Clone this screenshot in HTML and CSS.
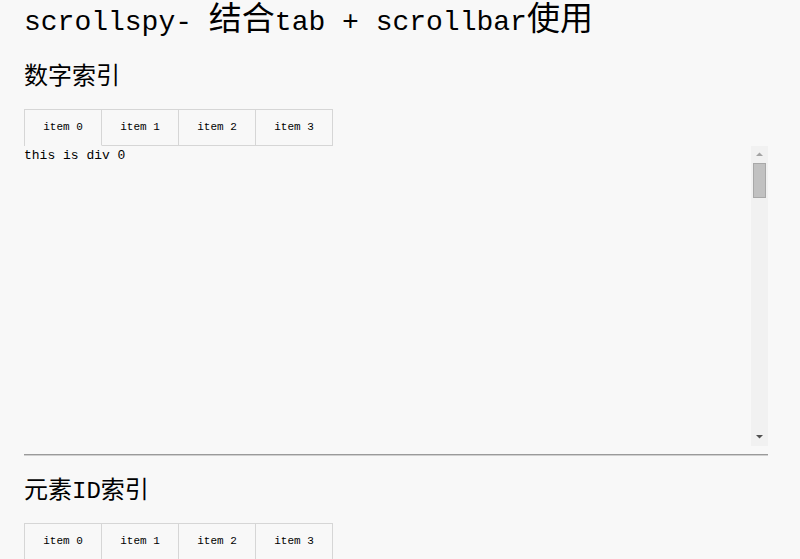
FILE: index.html
```html
<!DOCTYPE html>
<html lang="zh">
<head>
<meta charset="utf-8">
<title>scrollspy</title>
<link rel="stylesheet" href="styles.css">
</head>
<body>
<div class="page">
  <h1 class="title">scrollspy- <span class="cjk">结合</span>tab + scrollbar<span class="cjk">使用</span></h1>

  <section class="demo">
    <h2 class="subtitle">数字索引</h2>
    <ul class="tabs">
      <li class="tab active">item 0</li>
      <li class="tab">item 1</li>
      <li class="tab">item 2</li>
      <li class="tab">item 3</li>
    </ul>
    <div class="scroller">
      <div class="scroll-content">
        <div class="panel">this is div 0</div>
        <div class="panel">this is div 1</div>
        <div class="panel">this is div 2</div>
        <div class="panel">this is div 3</div>
      </div>
      <div class="scrollbar">
        <div class="sb-btn"><svg width="17" height="17" viewBox="0 0 17 17"><path d="M5 10h7L8.5 6.5z" fill="#a3a3a3"/></svg></div>
        <div class="sb-track"><div class="sb-thumb"></div></div>
        <div class="sb-btn"><svg width="17" height="17" viewBox="0 0 17 17"><path d="M5 6h7L8.5 9.5z" fill="#505050"/></svg></div>
      </div>
    </div>
  </section>

  <hr class="divider">

  <section class="demo">
    <h2 class="subtitle">元素ID索引</h2>
    <ul class="tabs">
      <li class="tab active">item 0</li>
      <li class="tab">item 1</li>
      <li class="tab">item 2</li>
      <li class="tab">item 3</li>
    </ul>
    <div class="scroller">
      <div class="scroll-content">
        <div class="panel">this is div 0</div>
        <div class="panel">this is div 1</div>
        <div class="panel">this is div 2</div>
        <div class="panel">this is div 3</div>
      </div>
      <div class="scrollbar">
        <div class="sb-btn"><svg width="17" height="17" viewBox="0 0 17 17"><path d="M5 10h7L8.5 6.5z" fill="#a3a3a3"/></svg></div>
        <div class="sb-track"><div class="sb-thumb"></div></div>
        <div class="sb-btn"><svg width="17" height="17" viewBox="0 0 17 17"><path d="M5 6h7L8.5 9.5z" fill="#505050"/></svg></div>
      </div>
    </div>
  </section>
</div>
</body>
</html>
```

FILE: styles.css
```css
html, body {
  margin: 0;
  padding: 0;
  background: #f8f8f8;
  color: #000;
  overflow: hidden;
}

.page {
  width: 744px;
  padding: 0 0 0 24px;
  font-family: "Liberation Mono", "Noto Sans CJK SC", monospace;
}

.title {
  margin: 0;
  padding-top: 2px;
  font-size: 28px;
  font-weight: normal;
  line-height: 40px;
  white-space: nowrap;
}

.title .cjk {
  font-size: 33px;
}

.subtitle {
  margin: 18px 0 14px;
  font-size: 24px;
  font-weight: normal;
  line-height: 34px;
}

.divider + .demo .subtitle {
  margin-top: 19px;
}

.tabs {
  display: flex;
  margin: 0;
  padding: 0;
  list-style: none;
  width: 308px;
  border-top: 1px solid #d6d6d6;
  border-left: 1px solid #d6d6d6;
}

.tab {
  width: 76px;
  height: 35px;
  line-height: 35px;
  text-align: center;
  font-size: 11px;
  border-right: 1px solid #d6d6d6;
  border-bottom: 1px solid #d6d6d6;
}

.tab.active {
  border-bottom-color: transparent;
}

.scroller {
  display: flex;
  height: 300px;
  font-size: 13px;
  line-height: 20px;
}

.scroll-content {
  flex: 1;
  overflow: hidden;
}

.panel {
  height: 570px;
}

.scrollbar {
  width: 17px;
  display: flex;
  flex-direction: column;
  background: #f1f1f1;
}

.sb-btn {
  height: 17px;
  flex: none;
}

.sb-btn svg {
  display: block;
}

.sb-track {
  flex: 1;
  padding: 0 2px;
}

.sb-thumb {
  height: 35px;
  box-sizing: border-box;
  background: #c1c1c1;
  border: 1px solid #a8a8a8;
}

.divider {
  margin: 8px 0 0;
  height: 0;
  border: 0;
  border-top: 1px solid #9a9a9a;
  border-bottom: 1px solid #d0d0d0;
}
```
